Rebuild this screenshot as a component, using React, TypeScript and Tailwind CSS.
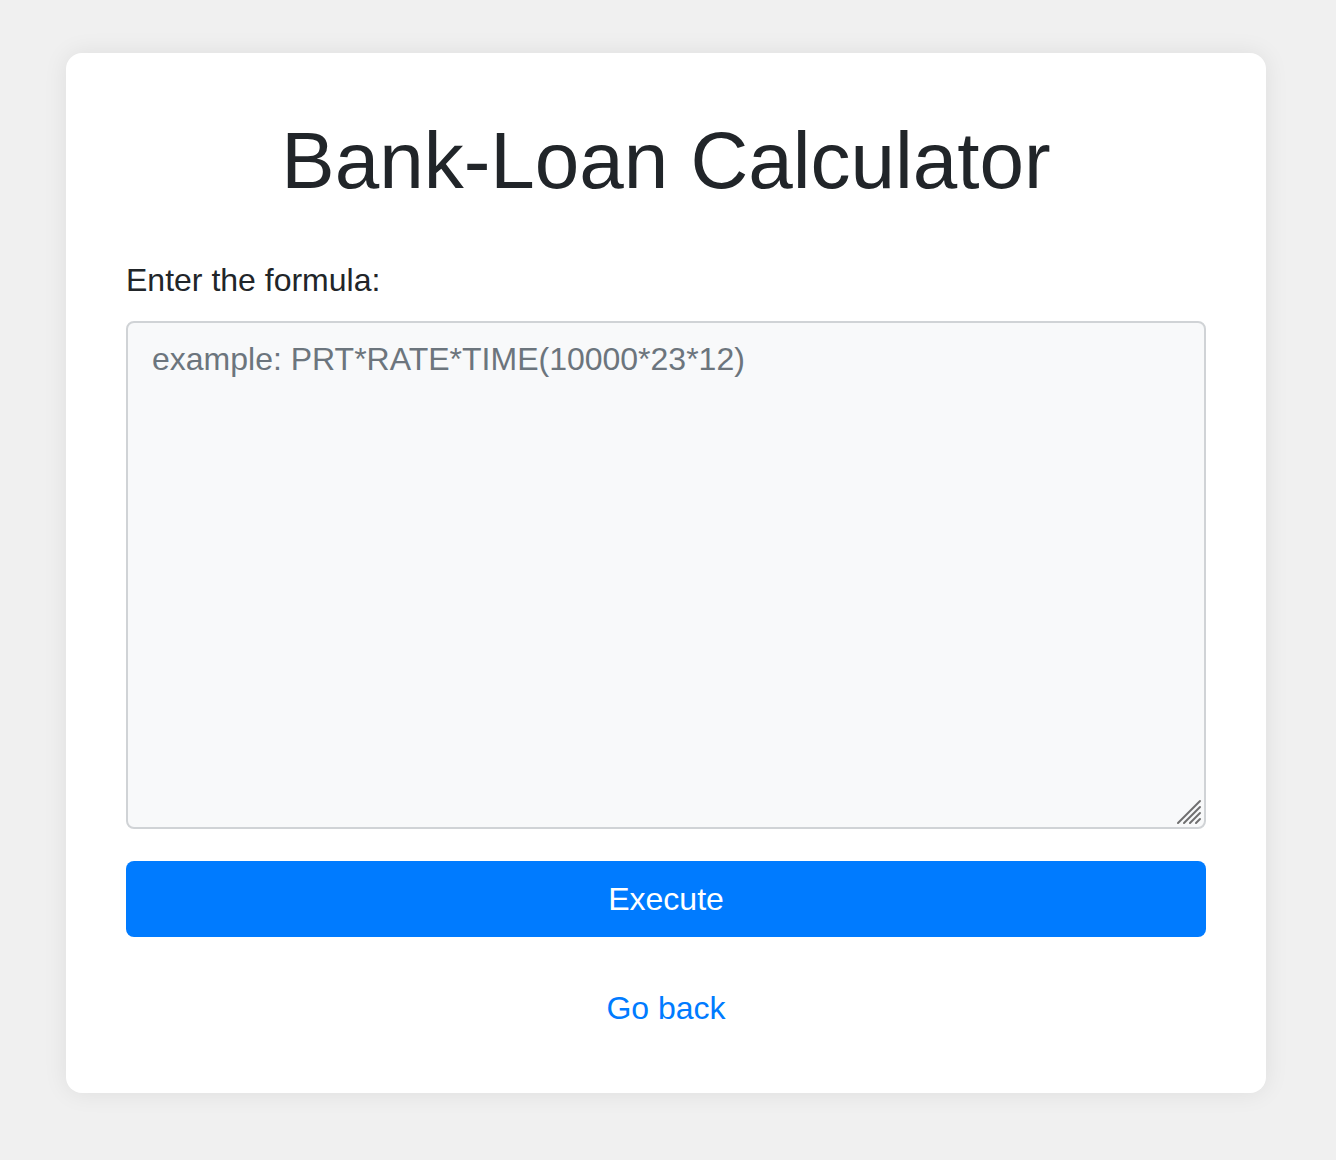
export default function App() {
  return (
    <div
      className="min-h-[1160px] bg-[#f0f0f0] pt-[53px]"
      style={{ fontFamily: '"Liberation Sans", Arial, sans-serif' }}
    >
      <div className="ml-[66px] w-[1200px] h-[1040px] bg-white rounded-[16px] shadow-[0_0_24px_rgba(0,0,0,0.08)] p-[60px]">
        <h1 className="text-center text-[80px] leading-[96px] text-[#212529] font-normal mb-[47px]">
          Bank-Loan Calculator
        </h1>
        <form onSubmit={(e) => e.preventDefault()}>
          <label className="block text-[32px] leading-[48px] text-[#212529] mb-[17px]">
            Enter the formula:
          </label>
          <div className="relative">
            <textarea
              placeholder="example: PRT*RATE*TIME(10000*23*12)"
              className="block w-full h-[508px] resize-none border-2 border-[#d0d3d6] rounded-[8px] bg-[#f8f9fa] px-[24px] py-[12px] text-[32px] leading-[48px] text-[#495057] placeholder:text-[#6c757d] outline-none"
            />
            {/* resize grip, drawn at 2x like the reference */}
            <svg
              className="absolute right-[4px] bottom-[4px] pointer-events-none"
              width="26"
              height="26"
              viewBox="0 0 26 26"
            >
              <g stroke="#6f6f6f" strokeWidth="2" strokeLinecap="round">
                <line x1="2" y1="24" x2="24" y2="2" />
                <line x1="8" y1="24" x2="24" y2="8" />
                <line x1="14" y1="24" x2="24" y2="14" />
                <line x1="20" y1="24" x2="24" y2="20" />
              </g>
            </svg>
          </div>
          <button
            type="submit"
            className="mt-[32px] w-full h-[76px] rounded-[8px] bg-[#007bff] text-white text-[32px] leading-[48px]"
          >
            Execute
          </button>
        </form>
        <div className="mt-[47px] text-center text-[32px] leading-[48px]">
          <a href="#" className="text-[#007bff]">
            Go back
          </a>
        </div>
      </div>
    </div>
  )
}
